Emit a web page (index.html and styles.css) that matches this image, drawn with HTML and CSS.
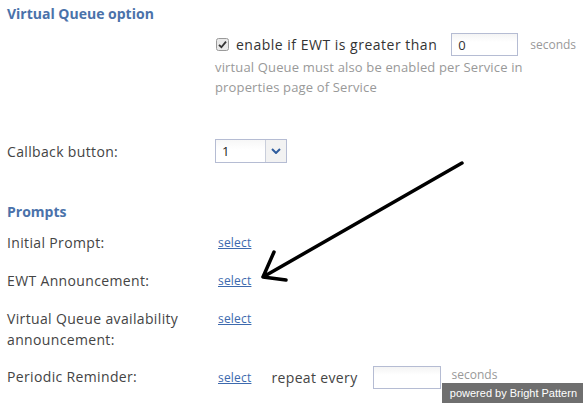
FILE: index.html
```html
<!DOCTYPE html>
<html lang="en">
<head>
    <meta charset="UTF-8">
    <title>Virtual Queue</title>
    <link rel="stylesheet" href="styles.css">
</head>
<body>

    <div class="page">
        <h3 class="section-title">Virtual Queue option</h3>

        <div class="form-row vq-row">
            <div class="label"></div>
            <div class="field">
                <div class="inline">
                    <span class="check">
                        <svg width="13" height="13" viewBox="0 0 13 13">
                            <rect x="0.5" y="0.5" width="12" height="12" rx="2" fill="#e9e9e9" stroke="#9a9a9a"/>
                            <path d="M3 6.8 L5.4 9.2 L10 3.6" fill="none" stroke="#333" stroke-width="1.8"/>
                        </svg>
                    </span>
                    <span class="check-text">enable if EWT is greater than</span>
                    <input type="text" class="text-input ewt-input" value="0">
                    <span class="hint">seconds</span>
                </div>
                <p class="note">virtual Queue must also be enabled per Service in properties page of Service</p>
            </div>
        </div>

        <div class="form-row callback-row">
            <div class="label">Callback button:</div>
            <div class="field">
                <div class="select">
                    <span class="select-value">1</span>
                    <span class="select-btn">
                        <svg width="10" height="6" viewBox="0 0 10 6"><path d="M1 1 L5 5 L9 1" fill="none" stroke="#2f5d9e" stroke-width="2"/></svg>
                    </span>
                </div>
            </div>
        </div>

        <h3 class="section-title prompts-title">Prompts</h3>

        <div class="form-row prompt-row first">
            <div class="label">Initial Prompt:</div>
            <div class="field"><a href="#" class="link">select</a></div>
        </div>
        <div class="form-row prompt-row">
            <div class="label">EWT Announcement:</div>
            <div class="field"><a href="#" class="link">select</a></div>
        </div>
        <div class="form-row prompt-row">
            <div class="label">Virtual Queue availability announcement:</div>
            <div class="field"><a href="#" class="link">select</a></div>
        </div>
        <div class="form-row prompt-row last">
            <div class="label">Periodic Reminder:</div>
            <div class="field inline">
                <a href="#" class="link">select</a>
                <span class="repeat">repeat every</span>
                <input type="text" class="text-input repeat-input">
                <span class="hint top">seconds</span>
            </div>
        </div>
    </div>

    <!-- hand drawn arrow -->
    <svg class="arrow" width="583" height="403" viewBox="0 0 583 403">
        <path d="M462 163 L263 277 M274 252 L263 277 L286 280" fill="none" stroke="#000" stroke-width="3.5" stroke-linecap="round" stroke-linejoin="round"/>
    </svg>

    <div class="powered">powered by Bright Pattern</div>

</body>
</html>
```

FILE: styles.css
```css
/* General Styles */
body {
    margin: 0;
    font-family: 'Open Sans', 'DejaVu Sans', sans-serif;
    font-size: 14px;
    letter-spacing: 0.35px;
    color: #444;
    background: #fff;
    width: 583px;
    height: 403px;
    overflow: hidden;
    position: relative;
}

.page {
    padding: 4px 7px 0;
}

.section-title {
    margin: 0;
    font-size: 14px;
    font-weight: bold;
    letter-spacing: 0;
    color: #4a72aa;
    line-height: 20px;
}

.prompts-title {
    margin-top: 39px;
}

.form-row {
    display: grid;
    grid-template-columns: 208px 1fr;
}

.label {
    line-height: 21px;
}

.inline {
    display: flex;
    align-items: center;
    white-space: nowrap;
}

.inline > * {
    flex-shrink: 0;
}

/* Virtual queue */
.vq-row {
    margin-top: 9px;
}

.check {
    display: flex;
    margin: 0 7px 0 1px;
}

.check-text {
    font-size: 14px;
    letter-spacing: 0.5px;
    color: #333;
    margin-right: 14px;
}

.text-input {
    box-sizing: border-box;
    height: 23px;
    border: 1px solid #b5bcd3;
    font-family: inherit;
    font-size: 13px;
    color: #333;
    padding: 0 6px;
    background: linear-gradient(#f4f4f4, #fff 8px);
}

.ewt-input {
    width: 67px;
    margin-right: 12px;
}

.hint {
    color: #999;
    font-size: 12px;
    letter-spacing: 0;
}

.hint.top {
    align-self: flex-start;
    line-height: 17px;
}

.note {
    margin: 1px 0 0;
    color: #999;
    font-size: 13px;
    letter-spacing: 0.15px;
    line-height: 20px;
    width: 345px;
}

/* Callback */
.callback-row {
    margin-top: 42px;
    align-items: center;
}

.select {
    display: flex;
    width: 72px;
    height: 24px;
    box-sizing: border-box;
    border: 1px solid #b5bcd3;
    background: linear-gradient(#f7f7f7, #fff 10px);
}

.select-value {
    flex: 1;
    padding-left: 6px;
    line-height: 22px;
    font-size: 13px;
    color: #222;
}

.select-btn {
    width: 20px;
    border-left: 1px solid #c9cedb;
    display: flex;
    align-items: center;
    justify-content: center;
    background: #f2f2f2;
}

/* Prompts */
.prompt-row {
    margin-top: 17px;
}

.prompt-row.first {
    margin-top: 10px;
}

.prompt-row.last {
    margin-top: 16px;
}

.prompt-row .label {
    width: 185px;
}

.link {
    color: #3d6aae;
    font-size: 12px;
    letter-spacing: 0.2px;
    line-height: 21px;
    margin-left: 3px;
}

.repeat {
    margin-left: 20px;
    margin-right: 15px;
}

.repeat-input {
    width: 68px;
    margin-right: 11px;
}

.arrow {
    position: absolute;
    left: 0;
    top: 0;
    pointer-events: none;
}

.powered {
    position: absolute;
    right: 0;
    bottom: 0;
    background: #6f6f6f;
    color: #fff;
    font-family: 'Liberation Sans', Arial, sans-serif;
    font-size: 11px;
    letter-spacing: 0;
    line-height: 20px;
    padding: 0 6px 0 8px;
}
```
